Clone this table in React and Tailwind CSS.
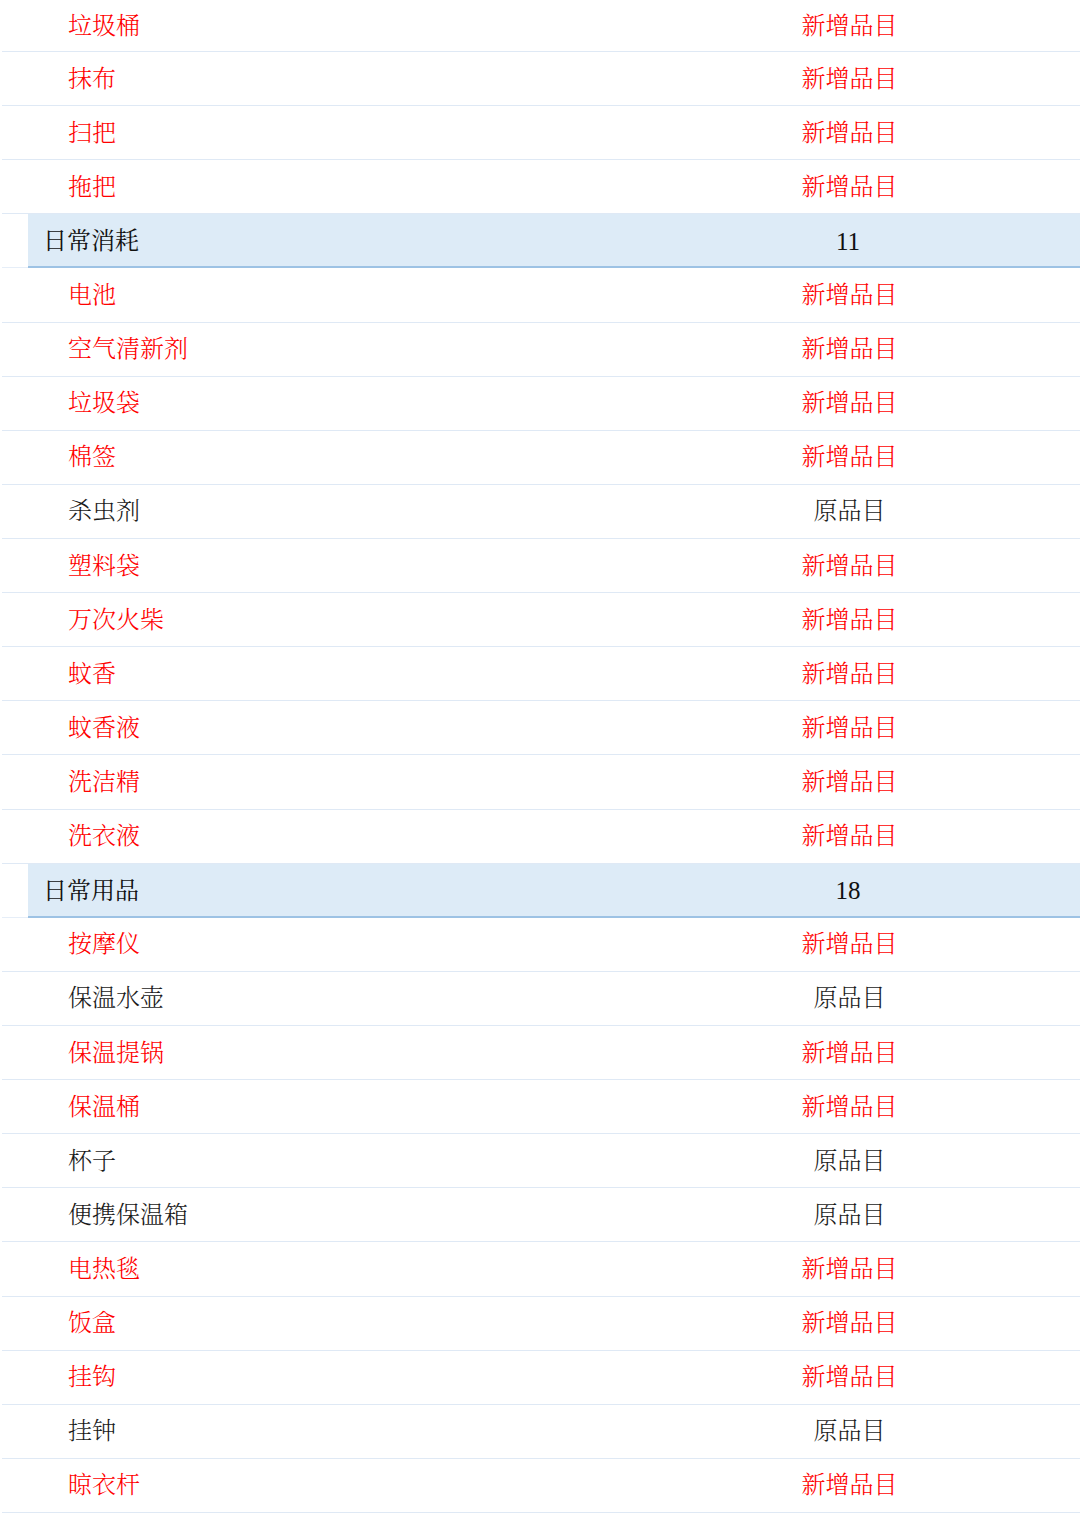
import React from 'react'

const rows = [
  ['item', '垃圾桶', '新增品目', true],
  ['item', '抹布', '新增品目', true],
  ['item', '扫把', '新增品目', true],
  ['item', '拖把', '新增品目', true],
  ['head', '日常消耗', '11'],
  ['item', '电池', '新增品目', true],
  ['item', '空气清新剂', '新增品目', true],
  ['item', '垃圾袋', '新增品目', true],
  ['item', '棉签', '新增品目', true],
  ['item', '杀虫剂', '原品目', false],
  ['item', '塑料袋', '新增品目', true],
  ['item', '万次火柴', '新增品目', true],
  ['item', '蚊香', '新增品目', true],
  ['item', '蚊香液', '新增品目', true],
  ['item', '洗洁精', '新增品目', true],
  ['item', '洗衣液', '新增品目', true],
  ['head', '日常用品', '18'],
  ['item', '按摩仪', '新增品目', true],
  ['item', '保温水壶', '原品目', false],
  ['item', '保温提锅', '新增品目', true],
  ['item', '保温桶', '新增品目', true],
  ['item', '杯子', '原品目', false],
  ['item', '便携保温箱', '原品目', false],
  ['item', '电热毯', '新增品目', true],
  ['item', '饭盒', '新增品目', true],
  ['item', '挂钩', '新增品目', true],
  ['item', '挂钟', '原品目', false],
  ['item', '晾衣杆', '新增品目', true],
]

const font = { fontFamily: '"Liberation Serif", "Noto Serif CJK SC", "Noto Sans CJK SC", serif' }

const Row = ({ row, first }) => {
  const [kind, name, value, isNew] = row
  const h = first ? 'h-[52px]' : 'h-[54.12px]'
  if (kind === 'head') {
    return (
      <div className={`flex ${h}`}>
        <div className="w-[26px] shrink-0 border-b border-[#e6eef8]"></div>
        <div className="flex flex-1 bg-[#ddebf7] border-b-2 border-[#9dc2e4] text-[#111] font-normal">
          <div className="flex-1 flex items-center pl-[15px] pt-[2px]">{name}</div>
          <div className="w-[464px] flex items-center justify-center pt-[2px] text-[25px]">{value}</div>
        </div>
      </div>
    )
  }
  const color = isNew ? 'text-[#ff0000]' : 'text-[#1a1a1a]'
  return (
    <div className={`flex ${h} border-b border-[#dfe9f5] ${color}`}>
      <div className="w-[26px] shrink-0"></div>
      <div className="flex-1 flex items-center pl-[40px]">{name}</div>
      <div className="w-[464px] flex items-center justify-center pl-[3px]">{value}</div>
    </div>
  )
}

const App = () => {
  return (
    <div className="w-[1080px] h-[1517px] bg-white overflow-hidden pl-[2px] text-[24px] font-light leading-none" style={font}>
      {rows.map((r, i) => (
        <Row key={i} row={r} first={i === 0} />
      ))}
    </div>
  )
}

export default App
